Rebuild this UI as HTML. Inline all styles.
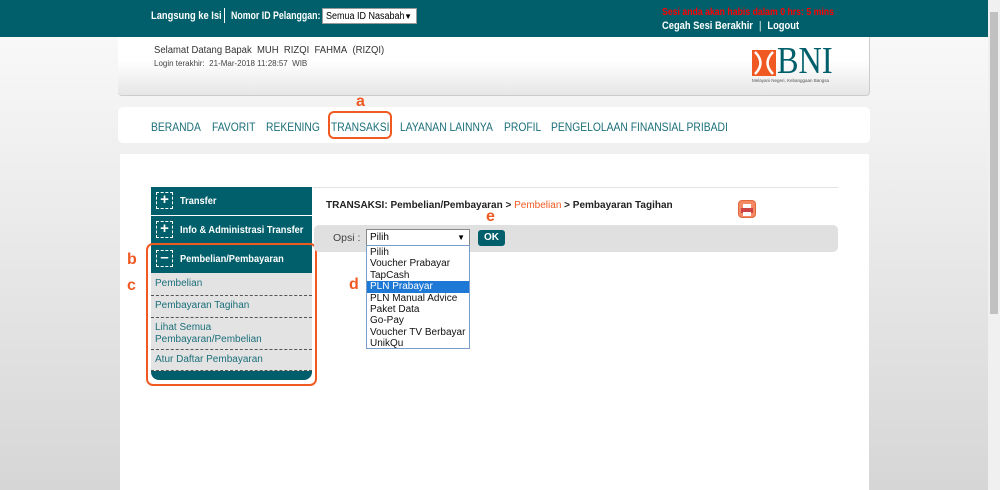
<!DOCTYPE html>
<html><head><meta charset="utf-8"><style>
*{margin:0;padding:0;box-sizing:border-box}
body{width:1000px;height:490px;overflow:hidden;font-family:"Liberation Sans",Arial,sans-serif;background:linear-gradient(#fbfbfb,#d6d6d6);position:relative}
.a{position:absolute;white-space:nowrap}
.top{left:0;top:0;width:988px;height:37px;background:#005f6b}
.tw{color:#fff;font-weight:bold;font-size:11px;transform:scaleX(.85);transform-origin:left}
.sb{left:988px;top:0;width:12px;height:490px;background:#f0f0f0}
.hdr{left:118px;top:37px;width:752px;height:59px;background:linear-gradient(#fff 40%,#e6e6e6);border-radius:0 0 4px 4px;border-right:1px solid #ccc;border-bottom:1px solid #ccc}
.nav{left:118px;top:107px;width:752px;height:36px;background:#fff;border-radius:5px}
.nav span{position:absolute;top:13px;font-size:12px;color:#1b6f7a;white-space:nowrap;transform:scaleX(.86);transform-origin:left}
.cont{left:120px;top:154px;width:749px;height:336px;background:#fff}
.mh{left:151px;width:161px;height:28px;background:#005f6b;color:#fff;font-size:10.5px;font-weight:bold}
.mh i{position:absolute;left:5px;top:5px;width:17px;height:17px;border:1px dashed #fff;font-style:normal;text-align:center;line-height:14px;font-size:15px;font-weight:bold}
.mh b{position:absolute;left:29px;top:8px;transform:scaleX(.88);transform-origin:left}
.sm{left:151px;width:161px;background:#e3e3e3;color:#1b6f7a;font-size:10px;padding:4px 4px;border-bottom:1px dashed #555;line-height:12px}
.or{color:#f05a22;font-weight:bold;font-size:16px}
.dd div{height:11.4px;font-size:10px;line-height:11.4px;padding-left:3px;color:#111}
</style></head><body>
<div class="a top"></div>
<div class="a tw" style="left:151px;top:10px">Langsung ke Isi</div>
<div class="a" style="left:224px;top:8px;width:1px;height:15px;background:#fff"></div>
<div class="a tw" style="left:231px;top:10px;transform:scaleX(.8)">Nomor ID Pelanggan:</div>
<div class="a" style="left:322px;top:8px;width:95px;height:16px;background:#fff;border:1px solid #999;font-size:10px;padding:2px 3px"><span style="display:inline-block;transform:scaleX(.9);transform-origin:left">Semua ID Nasabah</span><span style="font-size:8px;position:absolute;right:4px;top:3px">▼</span></div>
<div class="a tw" style="left:662px;top:6px;color:#f00;font-size:10.5px;transform:scaleX(.83)">Sesi anda akan habis dalam 0 hrs: 5 mins</div>
<div class="a tw" style="left:662px;top:20px">Cegah Sesi Berakhir <span style="font-weight:normal;margin:0 4px">|</span> Logout</div>
<div class="a sb"><div class="a" style="left:2px;top:12px;width:8px;height:302px;background:#c1c1c1"></div></div>
<div class="a hdr"></div>
<div class="a" style="left:154px;top:45px;font-size:10px;color:#333;transform:scaleX(.95);transform-origin:left">Selamat Datang Bapak&nbsp; MUH&nbsp; RIZQI&nbsp; FAHMA&nbsp; (RIZQI)</div>
<div class="a" style="left:154px;top:59px;font-size:8px;color:#444">Login terakhir:&nbsp; 21-Mar-2018 11:28:57&nbsp; WIB</div>
<svg class="a" style="left:752px;top:50px" width="24" height="26"><rect width="24" height="26" fill="#f05a22"/><path d="M3 2 Q14 13 3 24 M21 2 Q10 13 21 24" stroke="#fff" stroke-width="2.5" fill="none"/></svg>
<div class="a" style="left:777px;top:42px;font-family:'Liberation Serif',serif;font-size:38px;color:#005f6b;line-height:38px;transform:scaleX(.85);transform-origin:left">BNI</div>
<div class="a" style="left:752px;top:78px;font-size:4.5px;color:#555">Melayani Negeri, Kebanggaan Bangsa</div>
<div class="a nav"><span style="left:33px">BERANDA</span><span style="left:94px">FAVORIT</span><span style="left:148px">REKENING</span><span style="left:213px">TRANSAKSI</span><span style="left:282px">LAYANAN LAINNYA</span><span style="left:386px">PROFIL</span><span style="left:433px">PENGELOLAAN FINANSIAL PRIBADI</span></div>
<div class="a" style="left:328px;top:111px;width:64px;height:28px;border:2px solid #f05a22;border-radius:6px"></div>
<div class="a or" style="left:356px;top:93px">a</div>
<div class="a cont"></div>
<div class="a" style="left:313px;top:187px;width:525px;height:1px;background:#e2e2e2"></div>
<div class="a mh" style="top:187px"><i>+</i><b>Transfer</b></div>
<div class="a mh" style="top:216px"><i>+</i><b>Info &amp; Administrasi Transfer</b></div>
<div class="a mh" style="top:245px"><i>–</i><b>Pembelian/Pembayaran</b></div>
<div class="a sm" style="top:273px;height:23px;padding-top:5px">Pembelian</div>
<div class="a sm" style="top:296px;height:22px;padding-top:4px">Pembayaran Tagihan</div>
<div class="a sm" style="top:318px;height:32px">Lihat Semua<br>Pembayaran/Pembelian</div>
<div class="a sm" style="top:350px;height:21px">Atur Daftar Pembayaran</div>
<div class="a" style="left:151px;top:371px;width:161px;height:9px;background:#005f6b;border-radius:0 0 8px 8px"></div>
<div class="a" style="left:146px;top:243px;width:171px;height:143px;border:2px solid #f05a22;border-radius:7px"></div>
<div class="a or" style="left:127px;top:251px">b</div>
<div class="a or" style="left:127px;top:277px">c</div>
<div class="a" style="left:326px;top:200px;font-size:10px;font-weight:bold;color:#222">TRANSAKSI: Pembelian/Pembayaran &gt; <span style="color:#f05a22;font-weight:normal">Pembelian</span> &gt; Pembayaran Tagihan</div>
<div class="a" style="left:738px;top:200px;width:18px;height:18px;background:#f48a63;border-radius:4px;border:1px solid #e06a3e"><div class="a" style="left:4px;top:3px;width:8px;height:4px;background:#fff"></div><div class="a" style="left:2px;top:7px;width:12px;height:5px;background:#c44"></div><div class="a" style="left:4px;top:11px;width:8px;height:4px;background:#fff"></div></div>
<div class="a" style="left:314px;top:225px;width:524px;height:27px;background:#e0e0e0;border-radius:5px"></div>
<div class="a" style="left:333px;top:232px;font-size:10.5px;color:#444">Opsi :</div>
<div class="a" style="left:366px;top:229px;width:104px;height:17px;background:#fff;border:1px solid #888;font-size:10px;padding:2px 3px">Pilih<span style="position:absolute;right:4px;top:3px;font-size:8px">▼</span></div>
<div class="a" style="left:478px;top:230px;width:27px;height:16px;background:#005f6b;border-radius:3px;color:#fff;font-size:10px;font-weight:bold;text-align:center;line-height:16px">OK</div>
<div class="a or" style="left:486px;top:208px">e</div>
<div class="a dd" style="left:366px;top:245px;width:104px;height:104px;background:#fff;border:1px solid #7a9cc8;padding-top:1px">
<div>Pilih</div><div>Voucher Prabayar</div><div>TapCash</div><div style="background:#1e78d6;color:#fff">PLN Prabayar</div><div>PLN Manual Advice</div><div>Paket Data</div><div>Go-Pay</div><div>Voucher TV Berbayar</div><div>UnikQu</div></div>
<div class="a or" style="left:349px;top:276px">d</div>
</body></html>
